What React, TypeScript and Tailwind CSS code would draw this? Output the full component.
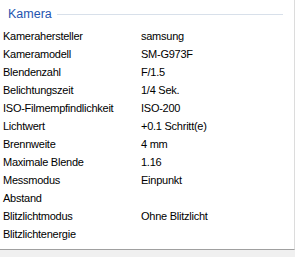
import React from "react";

const rows: [string, string][] = [
  ["Kamerahersteller", "samsung"],
  ["Kameramodell", "SM-G973F"],
  ["Blendenzahl", "F/1.5"],
  ["Belichtungszeit", "1/4 Sek."],
  ["ISO-Filmempfindlichkeit", "ISO-200"],
  ["Lichtwert", "+0.1 Schritt(e)"],
  ["Brennweite", "4 mm"],
  ["Maximale Blende", "1.16"],
  ["Messmodus", "Einpunkt"],
  ["Abstand", ""],
  ["Blitzlichtmodus", "Ohne Blitzlicht"],
  ["Blitzlichtenergie", ""],
];

export default function App() {
  return (
    <div
      className="w-[295px] h-[257px] bg-[#f0f0f0] flex flex-col"
      style={{ fontFamily: '"Liberation Sans", Arial, sans-serif' }}
    >
      <div className="h-[250px] bg-white border-r border-[#dcdcdc] border-b border-b-[#a0a0a0] flex flex-col">
        <div className="flex items-center h-[22px] pl-[8px] pr-[11px] pt-[6px]">
          <span className="text-[12.5px] text-[#1f55b0] leading-none">Kamera</span>
          <div className="flex-1 h-px bg-[#d8e0ea] ml-[5px]" />
        </div>
        <div className="flex flex-col pt-[5px]">
          {rows.map(([k, v]) => (
            <div key={k} className="flex h-[18px] items-center text-[11px] text-black tracking-[-0.25px]">
              <span className="w-[141px] pl-[3px]">{k}</span>
              <span>{v}</span>
            </div>
          ))}
        </div>
      </div>
    </div>
  );
}
